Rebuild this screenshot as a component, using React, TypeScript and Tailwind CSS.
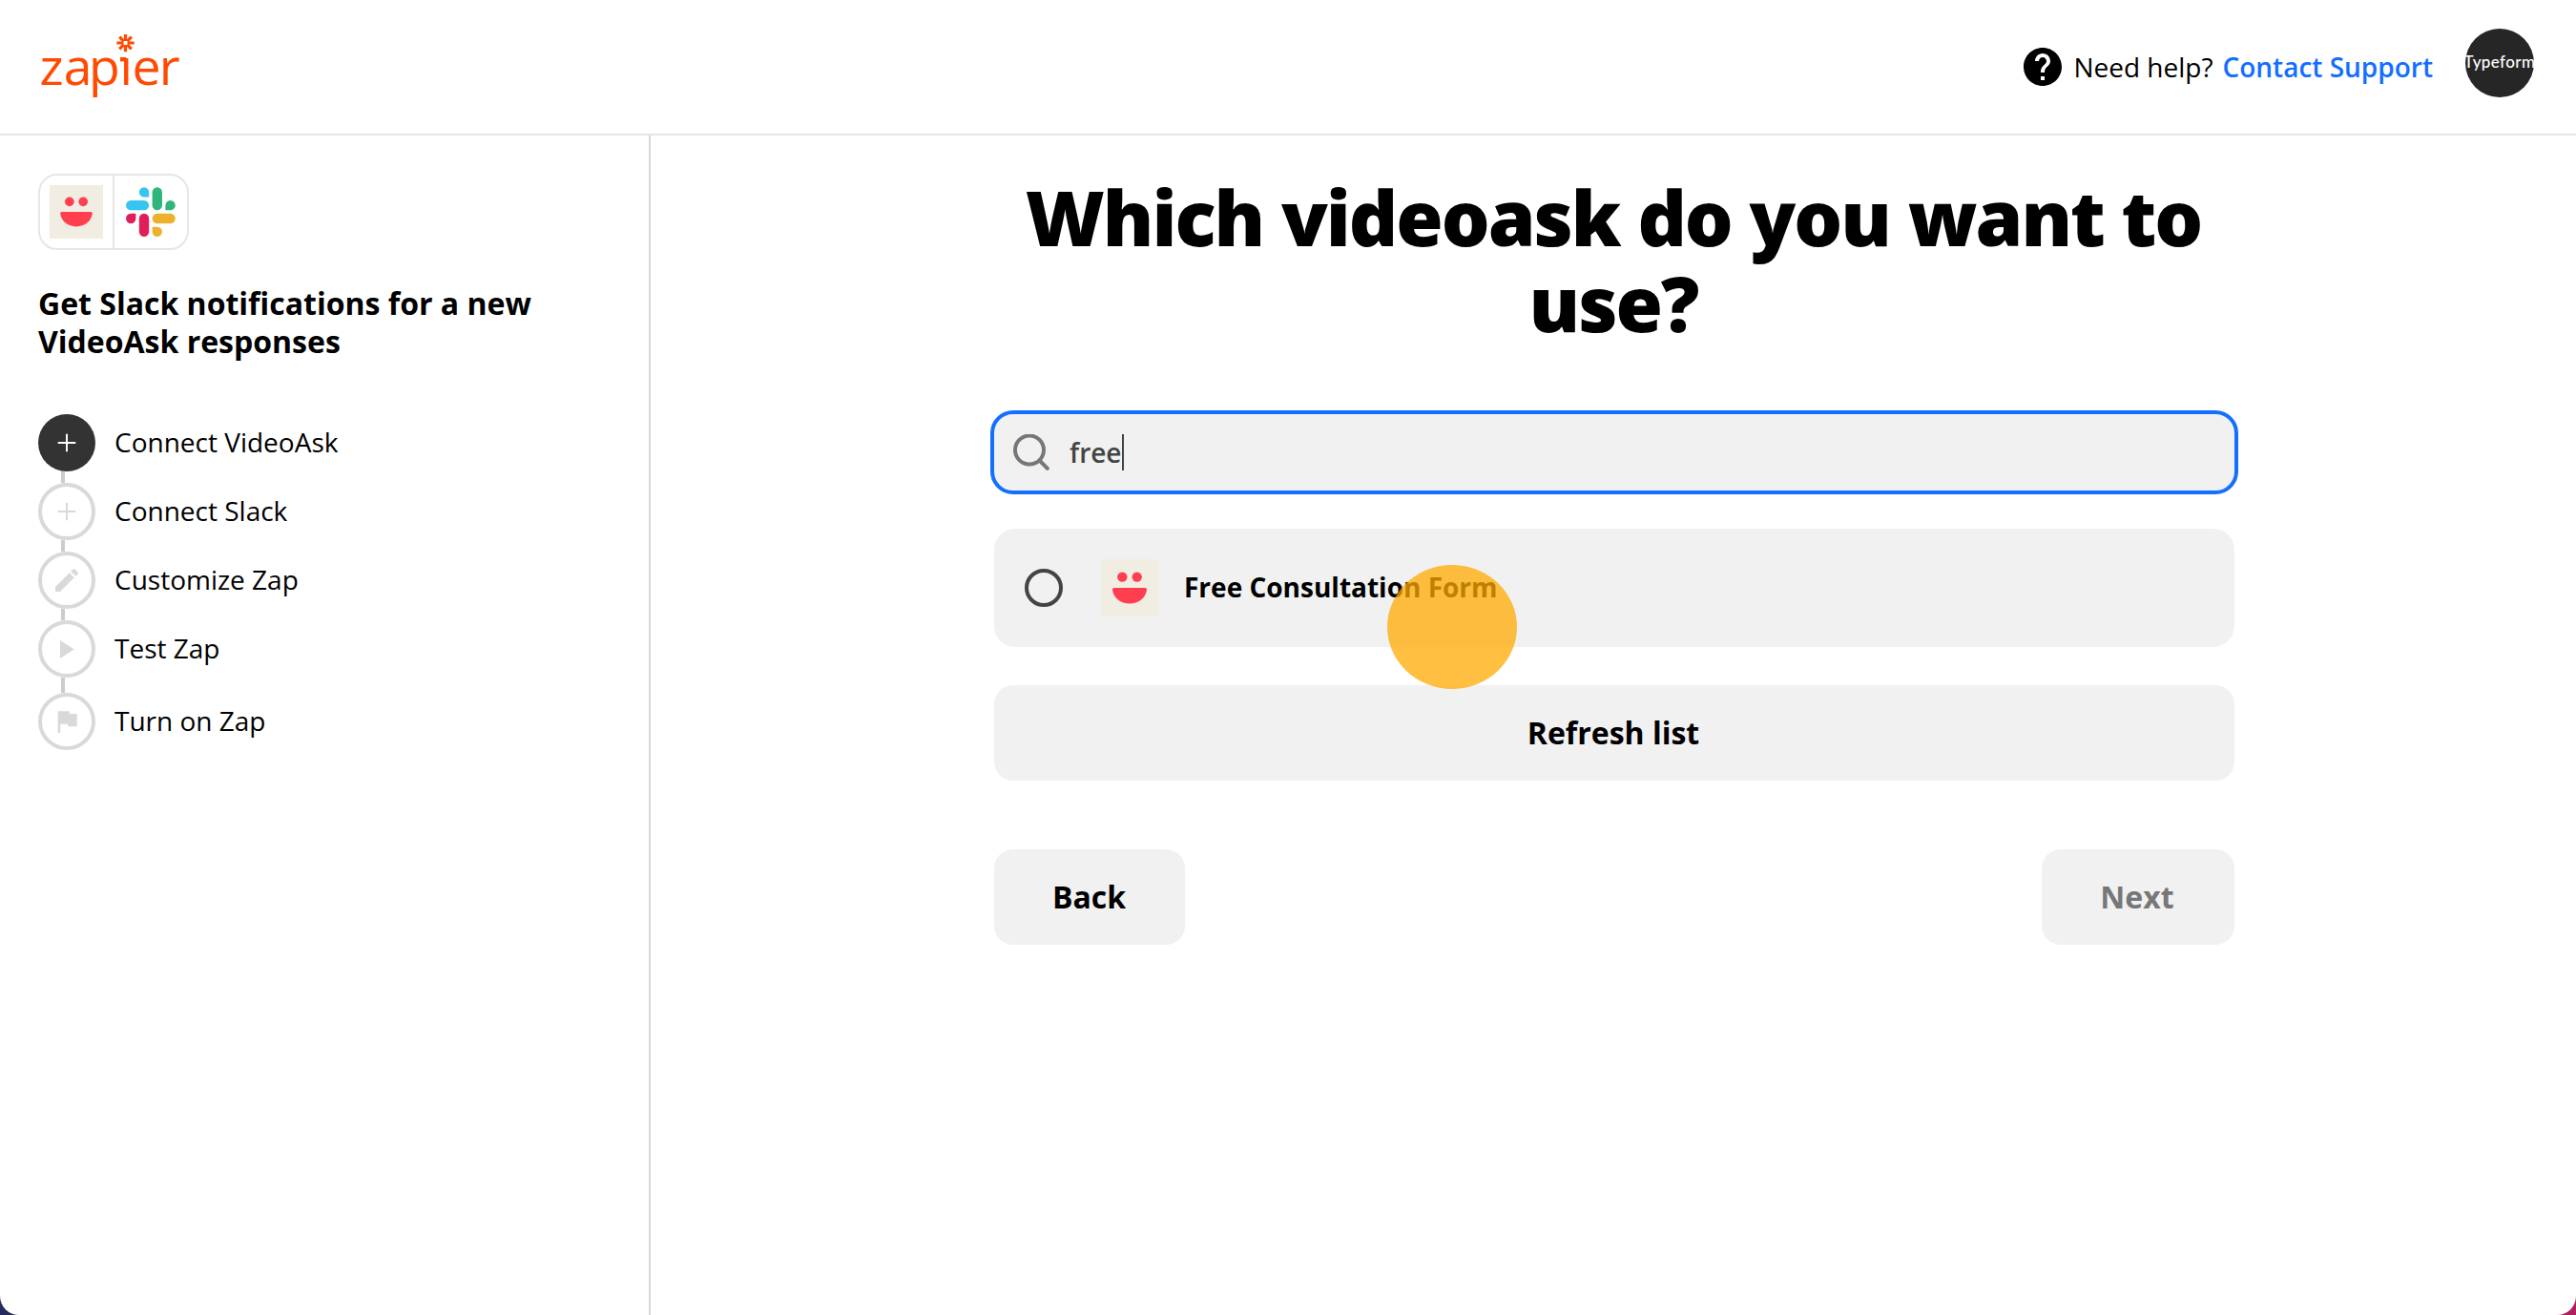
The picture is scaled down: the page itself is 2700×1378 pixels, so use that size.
import type { ReactNode } from "react";
import { MdEdit, MdFlag, MdHelp } from "react-icons/md";

function ZapierLogo() {
  return (
    <svg className="h-[80px] w-[160px] text-[#ff4a00]" viewBox="0 0 160 80" fill="currentColor">
      <text
        x="1.6 26.8 52.9 85.5 98.5 126.8"
        y="59"
        fontSize="53.5"
        className="font-['Open_Sans',sans-serif] font-[500]"
      >
        zapier
      </text>
      {/* i dot is replaced by the asterisk */}
      <rect x="84" y="10" width="16" height="18.5" fill="#fff" />
      <rect x="86" y="30" width="6" height="4.4" />
      <g stroke="currentColor" strokeWidth="3.2">
        <path d="M91.5 5.9v6.4M91.5 17.8v6.4M82.3 15h6.4M94.3 15h6.4" />
        <path d="M85.2 8.7l4.3 4.3M93.5 17l4.3 4.3M97.8 8.7L93.5 13M89.5 17l-4.3 4.3" />
      </g>
      <rect x="88.7" y="12.2" width="5.6" height="5.6" fill="#fff" stroke="currentColor" strokeWidth="1.6" />
    </svg>
  );
}

function VideoAskIcon({ className }: { className: string }) {
  return (
    <svg className={className} viewBox="0 0 60 60">
      <rect width="60" height="60" fill="#f1ede2" />
      <g fill="#ff3f50">
        <circle cx="22.3" cy="18.6" r="5.2" />
        <circle cx="37.7" cy="18.6" r="5.2" />
        <path d="M14 30h32c1.5 0 2.2.9 2 2.2C46.8 40.5 39.5 46.5 30 46.5S13.2 40.5 12 32.2c-.2-1.3.5-2.2 2-2.2z" />
      </g>
    </svg>
  );
}

function SlackIcon() {
  return (
    <svg className="h-[52px] w-[52px]" viewBox="0 0 54 54">
      <path
        fill="#36c5f0"
        d="M19.712.133a5.381 5.381 0 0 0-5.376 5.387 5.381 5.381 0 0 0 5.376 5.386h5.376V5.52A5.381 5.381 0 0 0 19.712.133m0 14.365H5.376A5.381 5.381 0 0 0 0 19.884a5.381 5.381 0 0 0 5.376 5.387h14.336a5.381 5.381 0 0 0 5.376-5.387 5.381 5.381 0 0 0-5.376-5.386"
      />
      <path
        fill="#2eb67d"
        d="M53.76 19.884a5.381 5.381 0 0 0-5.376-5.386 5.381 5.381 0 0 0-5.376 5.386v5.387h5.376a5.381 5.381 0 0 0 5.376-5.387m-14.336 0V5.52A5.381 5.381 0 0 0 34.048.133a5.381 5.381 0 0 0-5.376 5.387v14.364a5.381 5.381 0 0 0 5.376 5.387 5.381 5.381 0 0 0 5.376-5.387"
      />
      <path
        fill="#ecb22e"
        d="M34.048 54a5.381 5.381 0 0 0 5.376-5.387 5.381 5.381 0 0 0-5.376-5.386h-5.376v5.386A5.381 5.381 0 0 0 34.048 54m0-14.365h14.336a5.381 5.381 0 0 0 5.376-5.386 5.381 5.381 0 0 0-5.376-5.387H34.048a5.381 5.381 0 0 0-5.376 5.387 5.381 5.381 0 0 0 5.376 5.386"
      />
      <path
        fill="#e01e5a"
        d="M0 34.249a5.381 5.381 0 0 0 5.376 5.386 5.381 5.381 0 0 0 5.376-5.386v-5.387H5.376A5.381 5.381 0 0 0 0 34.25m14.336 0v14.364A5.381 5.381 0 0 0 19.712 54a5.381 5.381 0 0 0 5.376-5.387V34.25a5.381 5.381 0 0 0-5.376-5.387 5.381 5.381 0 0 0-5.376 5.387"
      />
    </svg>
  );
}

function PlusIcon() {
  return (
    <svg className="h-5 w-5" viewBox="0 0 20 20" stroke="currentColor" strokeWidth="2">
      <path d="M10 .7v18.6M.7 10h18.6" />
    </svg>
  );
}

function PlayIcon() {
  return (
    <svg className="h-[19px] w-[15px]" viewBox="0 0 15 19" fill="currentColor">
      <path d="M0 0l14.7 9.5L0 19z" />
    </svg>
  );
}

function SearchIcon() {
  return (
    <svg className="h-[38px] w-[38px]" viewBox="0 0 38 38" fill="none" stroke="#777" strokeWidth="4" strokeLinecap="round">
      <circle cx="17" cy="16.5" r="15" />
      <path d="M28.5 28.5L35.8 35.8" />
    </svg>
  );
}

type Step = { label: string; icon: ReactNode; active?: boolean; gap: string };

const steps: Step[] = [
  { label: "Connect VideoAsk", icon: <PlusIcon />, active: true, gap: "h-3" },
  { label: "Connect Slack", icon: <PlusIcon />, gap: "h-3" },
  { label: "Customize Zap", icon: <MdEdit size={32} />, gap: "h-3" },
  { label: "Test Zap", icon: <PlayIcon />, gap: "h-4" },
  { label: "Turn on Zap", icon: <MdFlag size={32} />, gap: "" },
];

function Header() {
  return (
    <header className="flex h-[142px] shrink-0 items-start justify-between border-b-2 border-[#e6e6e6] pl-10 pr-11 pt-[30px]">
      <ZapierLogo />
      <div className="flex items-start">
        <div className="mt-5 flex h-10 items-center text-[28px]">
          <MdHelp size={48} className="-ml-1 mr-2" />
          <span>Need help?</span>
          <a href="#" className="ml-2.5 font-semibold text-[#146eff]">
            Contact Support
          </a>
        </div>
        <div className="ml-[34px] flex h-[72px] w-[72px] items-center justify-center rounded-full bg-[#262626] pb-[3px]">
          <span className="font-['Lato',sans-serif] text-[17px] font-medium tracking-[0.4px] text-white">Typeform</span>
        </div>
      </div>
    </header>
  );
}

function Sidebar() {
  return (
    <aside className="w-[682px] shrink-0 border-r-2 border-[#d9d9d9] px-10 pt-10">
      <div className="flex h-20 w-[158px] rounded-[20px] border-2 border-[#e6e6e6]">
        <div className="flex w-[78px] items-center border-r-2 border-[#e6e6e6] pl-2.5">
          <VideoAskIcon className="h-14 w-14" />
        </div>
        <div className="flex flex-1 items-center justify-center">
          <SlackIcon />
        </div>
      </div>

      <h2 className="mt-9 w-[560px] text-[32px] font-bold leading-10">
        Get Slack notifications for a new VideoAsk responses
      </h2>

      <ol className="mt-14">
        {steps.map((step) => (
          <li key={step.label}>
            <div className="flex items-center gap-5">
              <span
                className={
                  step.active
                    ? "flex h-[60px] w-[60px] items-center justify-center rounded-full bg-[#333] text-white"
                    : "flex h-[60px] w-[60px] items-center justify-center rounded-full border-4 border-[#d9d9d9] text-[#d9d9d9]"
                }
              >
                {step.icon}
              </span>
              <span className="pb-0.5 text-[28px] leading-9">{step.label}</span>
            </div>
            {step.gap && <div className={`ml-6 w-1 bg-[#ccc] ${step.gap}`} />}
          </li>
        ))}
      </ol>
    </aside>
  );
}

export default function App() {
  return (
    <div className="h-[1378px] w-[2700px] bg-linear-to-r from-[#272a5c] to-[#b0205c] font-['Open_Sans',sans-serif] text-black">
      <div className="flex h-full flex-col overflow-hidden rounded-b-[20px] bg-white">
        <Header />
        <div className="flex flex-1">
          <Sidebar />
          <main className="flex flex-1 justify-center pl-0.5 pt-10">
            <div className="w-[1300px]">
              <h1 className="-ml-0.5 text-center text-[80px] font-extrabold leading-[90px] tracking-[-2px]">
                Which videoask do you want to use?
              </h1>

              {/* Search field */}
              <div className="-mx-1 mt-[68px] flex h-[88px] items-center rounded-3xl border-4 border-[#146eff] bg-[#f1f1f1] pl-5">
                <SearchIcon />
                <span className="ml-[21px] text-[28px] font-semibold text-[#444]">free</span>
                <span className="ml-px h-[38px] w-0.5 bg-[#444]" />
              </div>

              {/* Results */}
              <div className="relative mt-9 flex h-[124px] items-center rounded-[22px] bg-[#f1f1f1] pl-8">
                <span className="h-10 w-10 rounded-full border-4 border-[#444]" />
                <VideoAskIcon className="ml-10 h-[60px] w-[60px]" />
                <span className="ml-[27px] pb-0.5 text-[28px] font-bold">Free Consultation Form</span>
                {/* Click marker */}
                <span className="absolute left-[412px] top-[38px] z-10 h-[130px] w-[136px] rounded-[50%] bg-[#ffaa00]/75" />
              </div>

              <button type="button" className="mt-10 h-[100px] w-full rounded-[20px] bg-[#f1f1f1] pr-0.5 text-[32px] font-bold">
                Refresh list
              </button>

              <div className="mt-[72px] flex justify-between">
                <button type="button" className="h-[100px] w-[200px] rounded-[20px] bg-[#f1f1f1] pr-px text-[32px] font-bold">
                  Back
                </button>
                <button type="button" className="h-[100px] w-[202px] rounded-[20px] bg-[#f1f1f1] pr-0.5 text-[32px] font-bold text-[#777]">
                  Next
                </button>
              </div>
            </div>
          </main>
        </div>
      </div>
    </div>
  );
}
